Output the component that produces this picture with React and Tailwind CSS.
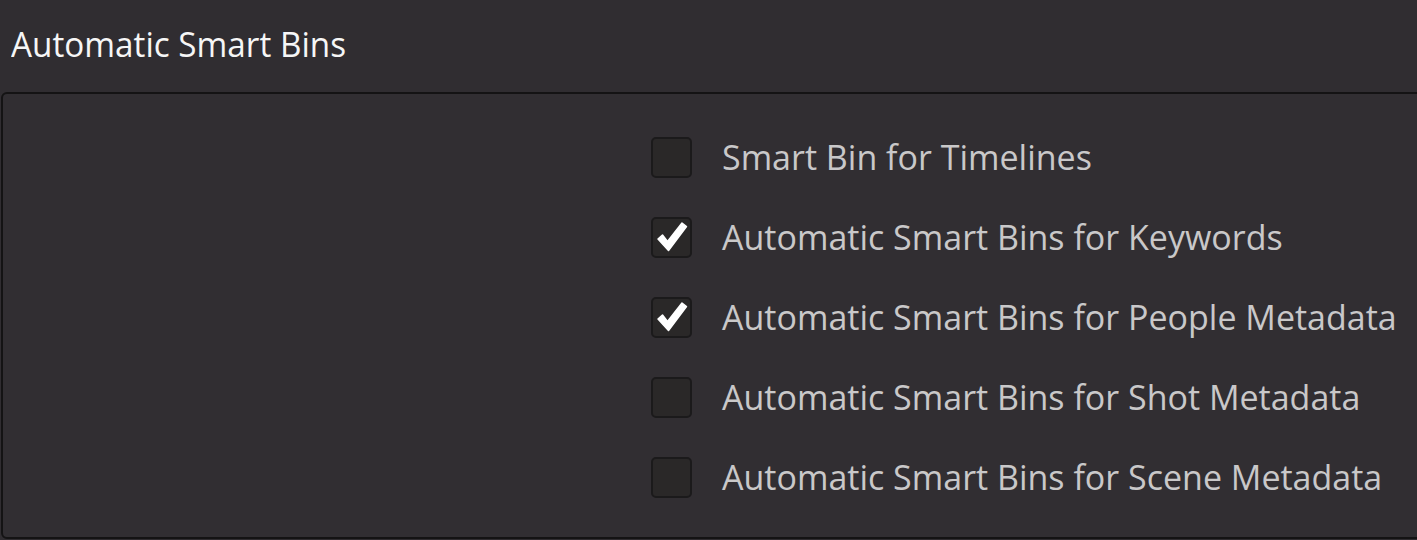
import React from 'react';

const items = [
  { label: 'Smart Bin for Timelines', checked: false },
  { label: 'Automatic Smart Bins for Keywords', checked: true },
  { label: 'Automatic Smart Bins for People Metadata', checked: true },
  { label: 'Automatic Smart Bins for Shot Metadata', checked: false },
  { label: 'Automatic Smart Bins for Scene Metadata', checked: false },
];

function Checkbox({ checked }) {
  return (
    <div className="relative w-[41px] h-[41px] rounded-[5px] bg-[#2a2828] border-2 border-[#1b1a1b] shrink-0">
      {checked && (
        <svg viewBox="0 0 41 41" className="absolute left-[-2px] top-[-2px] w-[41px] h-[41px]">
          <path
            d="M7 22 L11.5 18 L16.5 24.5 L31 6 L35.5 9.5 L17.5 33.5 Z"
            fill="#ffffff"
            stroke="#ffffff"
            strokeWidth="1.5"
            strokeLinejoin="round"
          />
        </svg>
      )}
    </div>
  );
}

export default function App() {
  return (
    <div
      className="w-[1417px] h-[540px] bg-[#302d31] overflow-hidden flex flex-col"
      style={{ fontFamily: '"Open Sans", sans-serif' }}
    >
      <div className="h-[92px] shrink-0 pl-[11px] pt-[20px]">
        <h1 className="text-[35px] leading-[48px] text-[#f6f6f6] font-medium origin-left scale-x-[0.95] whitespace-nowrap">
          Automatic Smart Bins
        </h1>
      </div>
      <div className="flex-1 ml-[1px] mr-[-6px] mb-[1px] border-2 border-[#141314] rounded-l-[6px] bg-[#312e32] pl-[648px] pt-[42px]">
        <div className="flex flex-col gap-[38px]">
          {items.map((it) => (
            <div key={it.label} className="flex items-center h-[42px]">
              <Checkbox checked={it.checked} />
              <span className="ml-[30px] text-[34px] leading-none text-[#c9c8c9] whitespace-nowrap">
                {it.label}
              </span>
            </div>
          ))}
        </div>
      </div>
    </div>
  );
}
